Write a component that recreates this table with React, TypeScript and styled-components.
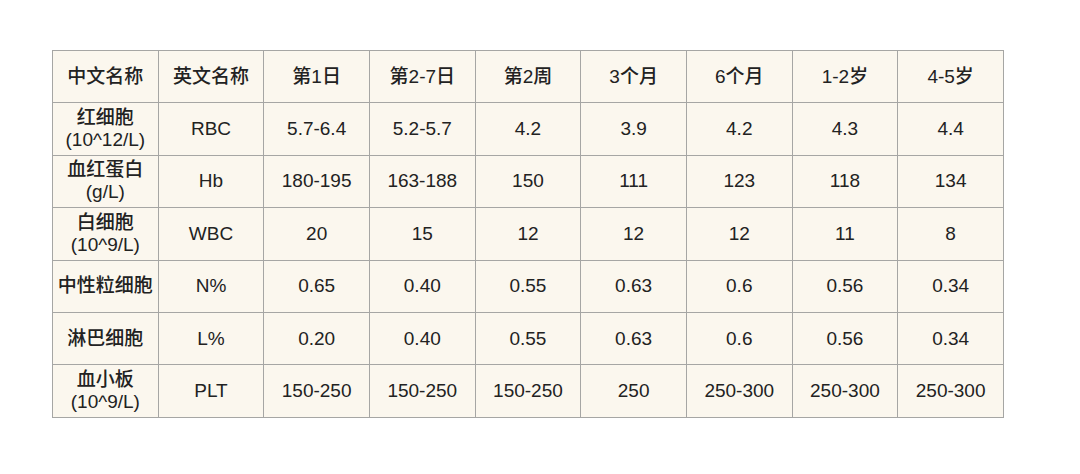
import React from "react";
import styled, { createGlobalStyle } from "styled-components";

const GlobalStyle = createGlobalStyle`
  html, body {
    margin: 0;
    padding: 0;
    background: #ffffff;
  }
  body {
    font-family: "Liberation Sans", "Noto Sans CJK SC", sans-serif;
    color: #222222;
  }
`;

const Page = styled.div`
  width: 1080px;
  height: 474px;
  padding: 50px 0 0 52px;
  box-sizing: border-box;
`;

const Table = styled.table`
  border-collapse: collapse;
  table-layout: fixed;
  width: 952px;
  background: #fbf7ee;
  border: 1px solid #b4b4b2;
`;

const Cell = styled.td`
  height: 51.4px;
  padding: 0;
  border: 1px solid #a6a6a4;
  text-align: center;
  vertical-align: middle;
  font-size: 19px;
  line-height: 22px;
  color: #222222;
  font-weight: 500;
  white-space: nowrap;
`;

const header = ["中文名称", "英文名称", "第1日", "第2-7日", "第2周", "3个月", "6个月", "1-2岁", "4-5岁"];

const rows: { name: string[]; values: string[] }[] = [
  { name: ["红细胞", "(10^12/L)"], values: ["RBC", "5.7-6.4", "5.2-5.7", "4.2", "3.9", "4.2", "4.3", "4.4"] },
  { name: ["血红蛋白", "(g/L)"], values: ["Hb", "180-195", "163-188", "150", "111", "123", "118", "134"] },
  { name: ["白细胞", "(10^9/L)"], values: ["WBC", "20", "15", "12", "12", "12", "11", "8"] },
  { name: ["中性粒细胞"], values: ["N%", "0.65", "0.40", "0.55", "0.63", "0.6", "0.56", "0.34"] },
  { name: ["淋巴细胞"], values: ["L%", "0.20", "0.40", "0.55", "0.63", "0.6", "0.56", "0.34"] },
  { name: ["血小板", "(10^9/L)"], values: ["PLT", "150-250", "150-250", "150-250", "250", "250-300", "250-300", "250-300"] },
];

export default function App() {
  return (
    <>
      <GlobalStyle />
      <Page>
        <Table>
          <tbody>
            <tr>
              {header.map((h) => (
                <Cell key={h}>{h}</Cell>
              ))}
            </tr>
            {rows.map((r) => (
              <tr key={r.name[0]}>
                <Cell>
                  {r.name.map((line, i) => (
                    <div key={i}>{line}</div>
                  ))}
                </Cell>
                {r.values.map((v, i) => (
                  <Cell key={i}>{v}</Cell>
                ))}
              </tr>
            ))}
          </tbody>
        </Table>
      </Page>
    </>
  );
}
